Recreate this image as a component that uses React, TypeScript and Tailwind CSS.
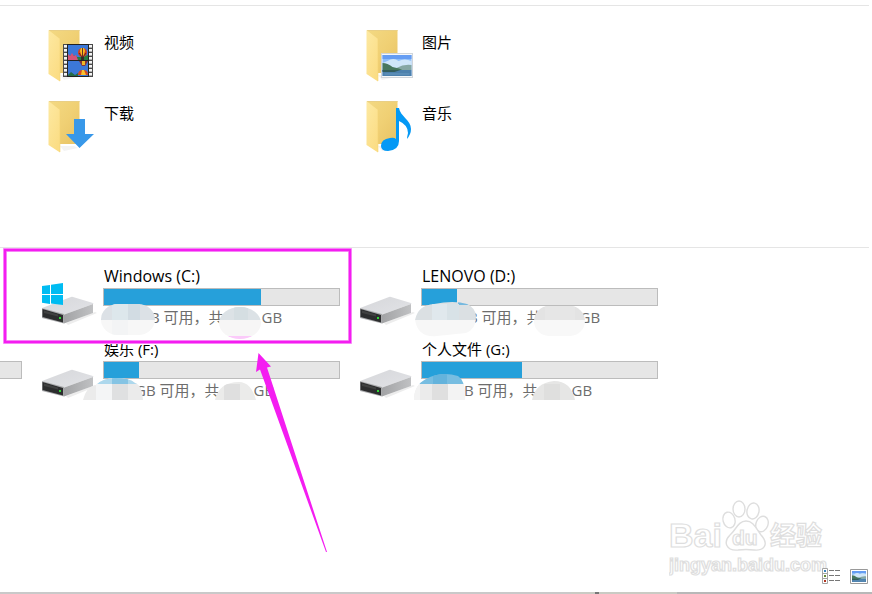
import type { ReactNode } from "react";

function FolderIcon({ id, children }: { id: string; children: ReactNode }) {
  return (
    <svg viewBox="0 0 52 54" className="h-[54px] w-[52px] shrink-0 overflow-visible" aria-hidden="true">
      <defs>
        <linearGradient id={`${id}-back`} x1="0" x2="1" y1="0" y2="1">
          <stop offset="0" stopColor="#f3d983" />
          <stop offset="0.5" stopColor="#f0d074" />
          <stop offset="1" stopColor="#e7c264" />
        </linearGradient>
        <linearGradient id={`${id}-front`} x1="0" x2="0.6" y1="0" y2="1">
          <stop offset="0" stopColor="#fde9a2" />
          <stop offset="1" stopColor="#fbdd85" />
        </linearGradient>
      </defs>
      <path d="M20 45h14l4 2-14 3z" fill="#f3f3f3" />
      <path d="M9 0h30.500v43H9z" fill={`url(#${id}-back)`} />
      <path d="M9 0h30.500v1H9z" fill="#e9cf85" />
      <path d="M8.500 0L20 9v42.500L8.500 44z" fill={`url(#${id}-front)`} />
      <path d="M20 9v42" stroke="#f4d376" fill="none" strokeWidth="0.6" />
      {children}
    </svg>
  );
}

function Landscape() {
  return (
    <>
      <path d="M0 0h29v21H0z" fill="#8dbdf7" />
      <path d="M0 0h29v4H0z" fill="#659df3" />
      <path d="M5 6q6-4 11 0q6-3 13 0v8H0V8z" fill="#cfe6f9" />
      <path d="M14 13q7-4 15-3v5H14z" fill="#86a7a4" />
      <path d="M0 8q5 0 10 4q7 1 12 4H0z" fill="#47775d" />
      <path d="M0 15h29v6H0z" fill="#4d81ad" />
      <path d="M0 15h18l-6 2H0z" fill="#335d5a" />
      <path d="M2 19h25" stroke="#6998be" />
    </>
  );
}

function Balloon({ x, y }: { x: number; y: number }) {
  return (
    <g transform={`translate(${x} ${y})`}>
      <ellipse cx="4.500" cy="4.500" rx="4.500" ry="4.500" fill="#d74218" />
      <path d="M3 0h3l1 3-2 6H4L2 3z" fill="#f7bf22" />
      <path d="M4.500 0v9M1 5l3 4M8 5L5 9" stroke="#552226" strokeWidth="0.9" />
      <path d="M3 9h3v3H3z" fill="#362c27" />
    </g>
  );
}

function VideoBadge() {
  return (
    <g>
      <path d="M23 14h30v33H23z" fill="#4a4a4a" />
      <path d="M27 14h22v33H27z" fill="#222" />
      <path d="M28 15h20v15H28zM28 31h20v15H28z" fill="#3c78d8" />
      <path d="M28 26l5-1 4 2 5 0 6-2v5H28z" fill="#267d42" />
      <path d="M28 24l2 2 2-3 2 3 2-1 2 5H28z" fill="#d55378" />
      <Balloon x={38} y={18} />
      <path d="M39 31h9l-3 5h-3z" fill="#8b3436" />
      <path d="M42 31h3v4h-3z" fill="#f0b927" />
      <path d="M38 45q0-5 5-5t5 5z" fill="#d94a1c" />
      <path d="M41 45l1-5h2l2 5z" fill="#f6c12f" />
      <path d="M28 45l3-3 4 3 3-2v3H28z" fill="#256c46" />
      {[0, 1, 2, 3, 4, 5, 6, 7].map((n) => (
        <g key={n} fill="#f4f4f4">
          <rect x="24" y={15 + n * 4} width="3" height="2.600" />
          <rect x="49" y={15 + n * 4} width="3" height="2.600" />
        </g>
      ))}
    </g>
  );
}

function PictureBadge() {
  return (
    <g transform="translate(23 23)">
      <path d="M0 0h32v25H0z" fill="#d0d5da" />
      <path d="M1 1h30v23H1z" fill="#f5f8fa" />
      <g transform="translate(1.500 2)"><Landscape /></g>
    </g>
  );
}

function DriveIcon({ id, windows = false }: { id: string; windows?: boolean }) {
  return (
    <svg viewBox="0 0 58 46" className="h-[46px] w-[58px]" aria-hidden="true">
      <defs>
        <linearGradient id={`${id}-side`} x1="0" x2="1" y1="0" y2="0">
          <stop offset="0" stopColor="#a1a2a4" />
          <stop offset="1" stopColor="#c0c1c3" />
        </linearGradient>
        <linearGradient id={`${id}-top`} x1="0" x2="1" y1="0" y2="1">
          <stop offset="0" stopColor="#d6d7da" />
          <stop offset="1" stopColor="#e2e3e7" />
        </linearGradient>
      </defs>
      <path d="M26 42l29-11 2 1-29 12z" fill="#ededed" />
      <path d="M2 27l29-11q1-.4 2 0l20 6q1 .5 0 1L23 34z" fill={`url(#${id}-top)`} />
      <path d="M23 34l30-11v9L24 42.500z" fill={`url(#${id}-side)`} />
      <path d="M2 27l22 6v9.500L2 37z" fill="#a9aaac" />
      <path d="M2.500 28l20.500 6v7.500L2.500 36z" fill="#2c2d2e" />
      <path d="M4 29.500l14 4v2L4 32z" fill="#404141" />
      <path d="M19 36h2v2h-2z" fill="#30d735" />
      {windows && (
        <path
          d="M2 5l8-1v9H2zM11 3.800L23 2v11H11zM2 14h8v9l-8-1.200zM11 14h12v10l-12-1.500z"
          fill="#00bcf2"
        />
      )}
    </svg>
  );
}

const folders: { name: string; badge: ReactNode }[] = [
  { name: "视频", badge: <VideoBadge /> },
  { name: "图片", badge: <PictureBadge /> },
  {
    name: "下载",
    badge: <path d="M34 18h11v15h9L39.500 47 26 33h8z" fill="#3898e9" />,
  },
  {
    name: "音乐",
    badge: (
      <path
        d="M38 7h3c1 8 12 12 12 21q0 5-4 10q0-2 1-6q0-8-9-12v20q0 9-11 10q-7 0-7-5q0-7 9-8q4-1 6 1z"
        fill="#0499f5"
      />
    ),
  },
];

type DriveInfo = {
  name: string;
  letter: string;
  used: string;
  windows?: boolean;
  lead: string;
  gap: string;
};

const drives: DriveInfo[] = [
  { name: "Windows", letter: "(C:)", used: "w-[157px]", windows: true, lead: "w-9", gap: "w-[38px]" },
  { name: "LENOVO", letter: "(D:)", used: "w-[35px]", lead: "w-9", gap: "w-[38px]" },
  { name: "娱乐", letter: "(F:)", used: "w-[35px]", lead: "w-8", gap: "w-[34px]" },
  { name: "个人文件", letter: "(G:)", used: "w-[100px]", lead: "w-8", gap: "w-[34px]" },
];

function UsageBar({ used }: { used: string }) {
  return (
    <div className="h-[18px] w-[237px] border border-[#bcbcbc] bg-[#e6e6e6]">
      <div className={`h-full bg-[#26a0da] ${used}`} />
    </div>
  );
}

function Drive({ drive, id }: { drive: DriveInfo; id: string }) {
  const latin = /^[A-Za-z]/.test(drive.name);
  return (
    <button type="button" className="flex w-full items-start text-left">
      <span className="w-[63px] shrink-0 pt-[15px]">
        <DriveIcon id={id} windows={drive.windows} />
      </span>
      <div>
        <div className={`mb-0.5 h-5 whitespace-nowrap ${latin ? "pl-px text-[16px] leading-5" : "pl-px"}`}>
          {drive.name} {drive.letter}
        </div>
        <UsageBar used={drive.used} />
        <div className="mt-px flex h-5 whitespace-nowrap text-[#6d6d6d]">
          <span className={`shrink-0 ${drive.lead}`} />
          <span>GB 可用，共</span>
          <span className={`shrink-0 ${drive.gap}`} />
          <span>GB</span>
        </div>
      </div>
    </button>
  );
}

function Masks() {
  return (
    <>
      <defs>
        <clipPath id="m1"><rect x="101" y="304" width="54" height="31" rx="17" /></clipPath>
        <clipPath id="m2"><ellipse cx="240" cy="323" rx="21" ry="16" /></clipPath>
        <clipPath id="m3"><path d="M83 400q3-13 13-15q7-7 19-7q15 0 20 5q7 2 8 17z" /></clipPath>
        <clipPath id="m4"><path d="M215 400q4-18 24-18q12 0 17 18z" /></clipPath>
        <clipPath id="m5"><path d="M415 320q3-15 19-16q20-4 33 0q9 4 9 13q0 12-10 16l-29 3q-19 2-22-16z" /></clipPath>
        <clipPath id="m6"><rect x="534" y="306" width="51" height="30" rx="15" /></clipPath>
        <clipPath id="m7"><path d="M414 400q0-15 12-21q15-8 32-3q8 5 7 24z" /></clipPath>
        <clipPath id="m8"><path d="M532 400q3-17 22-19q17 0 21 19z" /></clipPath>
      </defs>
      <g clipPath="url(#m1)">
        <path d="M100 303h56v17h-56z" fill="#dce1e6" />
        <path d="M112 303h16v17h-16z" fill="#dde7ec" />
        <path d="M128 303h12v17h-12z" fill="#d2dce3" />
        <path d="M100 320h56v16h-56z" fill="#f7f7f7" />
        <path d="M112 320h16v16h-16z" fill="#f3f4f5" />
      </g>
      <g clipPath="url(#m2)">
        <path d="M218 306h44v14h-44z" fill="#dce2e6" />
        <path d="M234 306h14v14h-14z" fill="#d5dee2" />
        <path d="M218 320h44v16h-44z" fill="#f7f6f6" />
        <path d="M218 336h44v4h-44z" fill="#fbcafa" />
      </g>
      <g clipPath="url(#m3)">
        <path d="M82 378h62v22H82z" fill="#ebebeb" />
        <path d="M96 378h48v6H96z" fill="#add8ed" />
        <path d="M112 378h16v6h-16z" fill="#85c4e4" />
        <path d="M96 384h16v16H96z" fill="#f4f5f6" />
        <path d="M112 384h16v16h-16z" fill="#dfe0e1" />
      </g>
      <g clipPath="url(#m4)">
        <path d="M214 381h44v19h-44z" fill="#ebebea" />
        <path d="M224 384h16v16h-16z" fill="#dfdfdf" />
      </g>
      <g clipPath="url(#m5)">
        <path d="M414 302h64v18h-64z" fill="#dbe0e3" />
        <path d="M458 302h20v3h-20z" fill="#76b9df" />
        <path d="M432 304h15v16h-15z" fill="#e0e8ed" />
        <path d="M447 304h12v16h-12z" fill="#d8e2e7" />
        <path d="M414 320h64v18h-64z" fill="#f7f7f7" />
      </g>
      <g clipPath="url(#m6)">
        <path d="M533 305h53v15h-53z" fill="#e3e3e3" />
        <path d="M545 305h30v15h-30z" fill="#e6e6e6" />
        <path d="M533 320h53v17h-53z" fill="#f8f8f8" />
      </g>
      <g clipPath="url(#m7)">
        <path d="M413 373h53v11h-53z" fill="#77bde1" />
        <path d="M433 373h14v11h-14z" fill="#64b3dc" />
        <path d="M413 384h53v16h-53z" fill="#ebebeb" />
        <path d="M413 384h7v16h-7zM448 384h17v16h-17z" fill="#f3f3f3" />
        <path d="M432 384h16v16h-16z" fill="#dfdfdf" />
      </g>
      <g clipPath="url(#m8)">
        <path d="M531 380h45v20h-45z" fill="#e6e6e5" />
        <path d="M544 384h16v16h-16z" fill="#dfdfde" />
      </g>
    </>
  );
}

function Annotations() {
  return (
    <svg
      viewBox="0 0 872 594"
      className="pointer-events-none absolute top-0 left-0 h-[594px] w-[872px]"
      aria-hidden="true"
    >
      <Masks />
      <rect x="5" y="250" width="345" height="92" fill="none" stroke="#f9a6f8" strokeWidth="4" />
      <rect x="5" y="250" width="345" height="92" fill="none" stroke="#f41df1" strokeWidth="2.500" />
      <path d="M258.500 353L256 372l4-2.500L326 552h1L267 367.500l4-1z" fill="#f41df1" />
    </svg>
  );
}

function Watermark() {
  return (
    <svg
      viewBox="0 0 170 90"
      className="pointer-events-none absolute right-[33px] bottom-[17px] h-[90px] w-[170px]"
      aria-label="Baidu 经验"
    >
      <g fill="#fff" stroke="#dedede" strokeWidth="1.400">
        <ellipse cx="70" cy="22" rx="6" ry="8" />
        <ellipse cx="84" cy="24" rx="6" ry="8" transform="rotate(12 84 24)" />
        <ellipse cx="60" cy="33" rx="6" ry="8" transform="rotate(-15 60 33)" />
        <ellipse cx="93" cy="37" rx="6" ry="8" transform="rotate(20 93 37)" />
        <path d="M77 34c8 0 10 8 15 14c9 10 2 16-7 15q-8-1-16 0c-12 1-15-8-8-15c6-5 8-14 16-14z" />
      </g>
      <g fill="#fff" stroke="#dedede" strokeWidth="1.200" className="font-['Liberation_Sans','Noto_Sans_CJK_SC',sans-serif] font-bold">
        <text x="0" y="60" fontSize="34">Bai</text>
        <text x="63" y="58" fontSize="21">du</text>
        <text x="101" y="58" fontSize="26">经验</text>
        <text x="0" y="84" fontSize="18">jingyan.baidu.com</text>
      </g>
    </svg>
  );
}

function ViewSwitch() {
  return (
    <div className="flex items-center justify-end gap-[10px] pr-1">
      <button type="button" aria-label="Details view">
        <svg viewBox="0 0 18 16" className="h-4 w-[18px]" aria-hidden="true">
          <path d="M.5.5h5v15h-5zM.5 5.500h5M.5 10.500h5" fill="#fff" stroke="#a4a4a4" />
          <path d="M2 2h2v2H2z" fill="#3b84bd" />
          <path d="M2 7h2v2H2z" fill="#668932" />
          <path d="M2 12h2v2H2z" fill="#b33520" />
          <path d="M7 2.500h5m1 0h5M7 7.500h5m1 0h5M7 12.500h5m1 0h5" stroke="#777" />
        </svg>
      </button>
      <button type="button" aria-label="Large icons view">
        <svg viewBox="0 0 18 15" className="h-[15px] w-[18px]" aria-hidden="true">
          <path d="M.5.5h17v14H.5z" fill="#fff" stroke="#999" />
          <g transform="translate(2 2) scale(.483 .524)"><Landscape /></g>
        </svg>
      </button>
    </div>
  );
}

export default function App() {
  return (
    <main className="relative flex min-h-screen flex-col overflow-hidden bg-white pt-[5px] font-['Open_Sans','Noto_Sans_CJK_SC',sans-serif] text-[15px] leading-5 text-black">
      <section className="mr-[3px] border-t border-[#e5e5e5] pt-6 pb-[92px] pl-10">
        <ul className="grid grid-cols-[repeat(2,318px)] gap-y-[17px]">
          {folders.map((folder, index) => (
            <li key={folder.name}>
              <button type="button" className="flex w-full items-start gap-3 text-left">
                <FolderIcon id={`folder-${index}`}>{folder.badge}</FolderIcon>
                <span className="pt-0.5">{folder.name}</span>
              </button>
            </li>
          ))}
        </ul>
      </section>
      <section className="mr-[3px] grow border-t border-[#e5e5e5] pt-[18px]">
        <ul className="-ml-[278px] grid grid-cols-[repeat(3,318px)] gap-y-3">
          <li />
          <li><Drive drive={drives[0]} id="drive-c" /></li>
          <li><Drive drive={drives[1]} id="drive-d" /></li>
          <li className="pt-[22px] pl-[63px]"><UsageBar used="w-0" /></li>
          <li><Drive drive={drives[2]} id="drive-f" /></li>
          <li><Drive drive={drives[3]} id="drive-g" /></li>
        </ul>
      </section>
      <Annotations />
      <Watermark />
      <footer className="relative">
        <ViewSwitch />
        <div className="mt-2 flex h-0.5 bg-[#b8b8b8]">
          <div className="w-[571px] bg-[#c9c9c9]" />
          <div className="w-6 bg-[#cacbc4]" />
          <div className="w-1 bg-[#777]" />
          <div className="w-[78px] bg-[#cacbc4]" />
        </div>
      </footer>
    </main>
  );
}
